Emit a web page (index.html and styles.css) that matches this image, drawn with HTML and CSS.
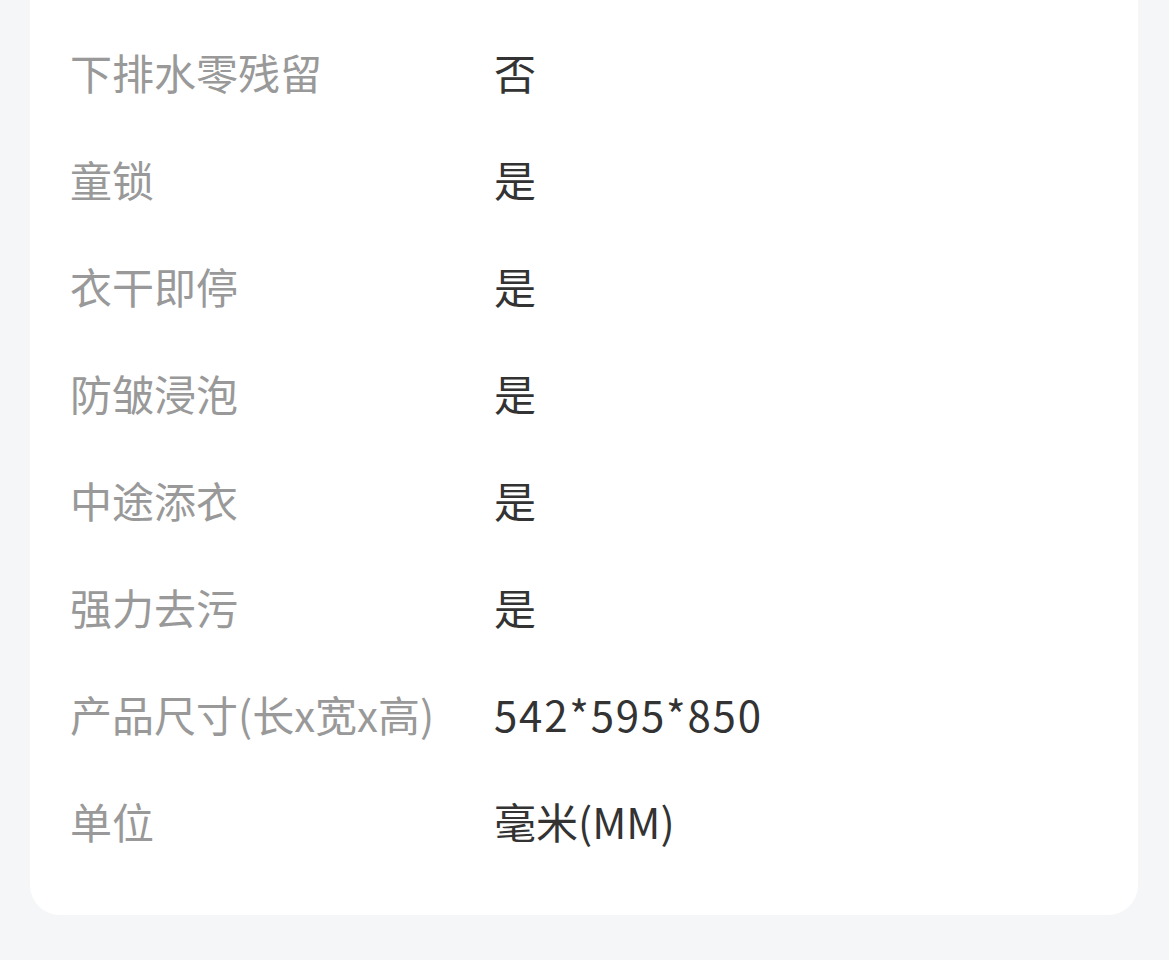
FILE: index.html
```html
<!DOCTYPE html>
<html lang="zh">
<head>
<meta charset="utf-8">
<link rel="stylesheet" href="styles.css">
</head>
<body>
<div class="page">
  <div class="card">
    <div class="row"><div class="label">下排水零残留</div><div class="value">否</div></div>
    <div class="row"><div class="label">童锁</div><div class="value">是</div></div>
    <div class="row"><div class="label">衣干即停</div><div class="value">是</div></div>
    <div class="row"><div class="label">防皱浸泡</div><div class="value">是</div></div>
    <div class="row"><div class="label">中途添衣</div><div class="value">是</div></div>
    <div class="row"><div class="label">强力去污</div><div class="value">是</div></div>
    <div class="row"><div class="label">产品尺寸(长x宽x高)</div><div class="value num">542*595*850</div></div>
    <div class="row"><div class="label">单位</div><div class="value">毫米(MM)</div></div>
  </div>
</div>
</body>
</html>
```
FILE: styles.css
```css
html, body {
  margin: 0;
  padding: 0;
  background: #f5f6f8;
}
body {
  font-family: "Noto Sans CJK SC", "Noto Sans", sans-serif;
}
.page {
  padding: 0 31px 0 30px;
}
.card {
  background: #ffffff;
  border-radius: 0 0 30px 30px;
  padding: 18px 40px 41px 40px;
}
.row {
  display: flex;
  align-items: center;
  height: 107px;
  font-size: 42px;
  line-height: 1;
}
.label {
  width: 424px;
  flex: none;
  color: #999999;
}
.value {
  color: #333333;
}
.num {
  letter-spacing: 1.8px;
}
```
